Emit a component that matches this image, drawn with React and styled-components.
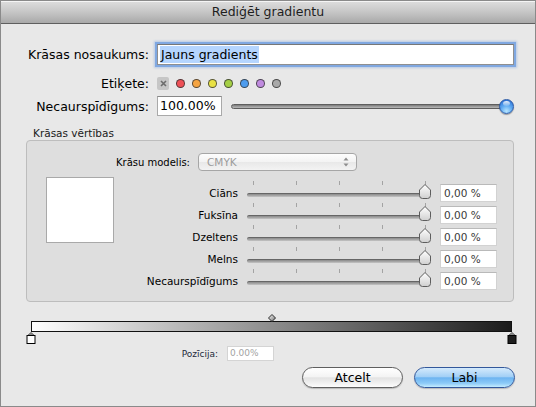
import React from 'react';
import styled, { createGlobalStyle } from 'styled-components';

const GlobalStyle = createGlobalStyle`
	* {
		box-sizing: border-box;
	}

	html,
	body {
		margin: 0;
		padding: 0;
		background: #e8e8e8;
	}

	body {
		font-family: 'DejaVu Sans', 'Liberation Sans', sans-serif;
		color: #000;
	}
`;

const tagColors = ['#ee5157', '#f5a442', '#e9e245', '#a5cf45', '#4d9cee', '#c08bdf', '#a9a9a9'];
const channels = ['Ciāns', 'Fuksīna', 'Dzeltens', 'Melns', 'Necaurspīdīgums'];
const stops = [
	{ pos: 0, color: '#ffffff' },
	{ pos: 100, color: '#1e1e1e' },
];

const ChannelKnob = () => (
	<KnobIcon width='12' height='15' viewBox='0 0 12 15'>
		<defs>
			<linearGradient id='knobFill' x1='0' y1='0' x2='0' y2='1'>
				<stop offset='0' stopColor='#ffffff' />
				<stop offset='1' stopColor='#d0d0d0' />
			</linearGradient>
		</defs>
		<path d='M6 0.5 L11.5 6 V11.5 Q11.5 14.5 8.5 14.5 H3.5 Q0.5 14.5 0.5 11.5 V6 Z' fill='url(#knobFill)' stroke='#5d5d5d' />
	</KnobIcon>
);

const StopHandle = ({ color }) => (
	<svg width='10' height='12' viewBox='0 0 10 12'>
		<polygon points='1.5,3.5 5,0.5 8.5,3.5' fill='#8a8a8a' stroke='#555' strokeWidth='0.8' />
		<rect x='1' y='3.5' width='8' height='8' fill={color} stroke='#000' />
	</svg>
);

const App = () => {
	return (
		<>
			<GlobalStyle />
			<Window>
				<TitleBar>Rediģēt gradientu</TitleBar>

				<FieldRow $top={20} $height={21}>
					<FieldLabel>Krāsas nosaukums:</FieldLabel>
					<NameField>
						<Selected>Jauns gradients</Selected>
					</NameField>
				</FieldRow>

				<FieldRow $top={11} $height={13}>
					<FieldLabel>Etiķete:</FieldLabel>
					<TagList>
						<ClearTag>
							<svg width='7' height='7' viewBox='0 0 7 7'>
								<path d='M1 1 L6 6 M6 1 L1 6' stroke='#6c6c6c' strokeWidth='1.6' />
							</svg>
						</ClearTag>
						{tagColors.map((color) => (
							<TagDot key={color} $color={color} />
						))}
					</TagList>
				</FieldRow>

				<FieldRow $top={7} $height={20}>
					<FieldLabel>Necaurspīdīgums:</FieldLabel>
					<OpacityControls>
						<PercentField>100.00%</PercentField>
						<OpacitySlider>
							<OpacityTrack />
							<AquaKnob />
						</OpacitySlider>
					</OpacityControls>
				</FieldRow>

				<SectionTitle>Krāsas vērtības</SectionTitle>
				<Group>
					<ModelRow>
						<ModelLabel>Krāsu modelis:</ModelLabel>
						<PopUp>
							CMYK
							<svg width='6' height='10' viewBox='0 0 6 10'>
								<path d='M3 0.5 L5.5 3.5 H0.5 Z M3 9.5 L5.5 6.5 H0.5 Z' fill='#8d8d8d' />
							</svg>
						</PopUp>
					</ModelRow>
					<GroupBody>
						<Swatch />
						<ChannelTable>
							{channels.map((name) => (
								<ChannelRow key={name}>
									<ChannelLabel>{name}</ChannelLabel>
									<ChannelSlider>
										<Ticks>
											{[0, 1, 2, 3, 4].map((i) => (
												<Tick key={i} />
											))}
										</Ticks>
										<ChannelTrack />
										<ChannelKnob />
									</ChannelSlider>
									<ValueBox>0,00 %</ValueBox>
								</ChannelRow>
							))}
						</ChannelTable>
					</GroupBody>
				</Group>

				<GradientEditor>
					<Midpoint style={{ left: '50%' }}>
						<svg width='8' height='8' viewBox='0 0 8 8'>
							<defs>
								<linearGradient id='midFill' x1='0' y1='0' x2='1' y2='1'>
									<stop offset='0' stopColor='#ffffff' />
									<stop offset='1' stopColor='#6a6a6a' />
								</linearGradient>
							</defs>
							<polygon points='4,0.5 7.5,4 4,7.5 0.5,4' fill='url(#midFill)' stroke='#2a2a2a' />
						</svg>
					</Midpoint>
					<GradientBar />
					{stops.map((stop) => (
						<Stop key={stop.pos} style={{ left: `${stop.pos}%` }}>
							<StopHandle color={stop.color} />
						</Stop>
					))}
				</GradientEditor>

				<PositionRow>
					<PositionLabel>Pozīcija:</PositionLabel>
					<PositionField>0.00%</PositionField>
				</PositionRow>

				<ButtonRow>
					<Button>Atcelt</Button>
					<Button $primary>Labi</Button>
				</ButtonRow>
			</Window>
		</>
	);
};

export default App;

const Window = styled.div`
	width: 536px;
	height: 407px;
	display: flex;
	flex-direction: column;
	border: 1px solid #8a8a8a;
	background: #e8e8e8;
	overflow: hidden;
`;

const TitleBar = styled.div`
	height: 23px;
	flex-shrink: 0;
	border-bottom: 1px solid #5f5f5f;
	background: linear-gradient(#dedede, #c6c6c6 50%, #a9a9a9);
	box-shadow: inset 0 1px 0 rgba(255, 255, 255, 0.7);
	text-align: center;
	font-size: 12.5px;
	line-height: 22px;
	color: #1e1e1e;
`;

const FieldRow = styled.div`
	display: grid;
	grid-template-columns: 148px 1fr;
	column-gap: 8px;
	align-items: center;
	flex-shrink: 0;
	margin-top: ${({ $top }) => $top}px;
	height: ${({ $height }) => $height}px;
	padding-right: 21px;
`;

const FieldLabel = styled.div`
	text-align: right;
	font-size: 12.5px;
	white-space: nowrap;
`;

const NameField = styled.div`
	height: 21px;
	padding: 1px 2px;
	background: #fff;
	border: 1px solid #8f8f8f;
	border-top-color: #777;
	box-shadow: 0 0 0 2px rgba(122, 164, 224, 0.9), 0 0 2px 3px rgba(122, 164, 224, 0.45);
	font-size: 12.5px;
	line-height: 17px;
`;

const Selected = styled.span`
	display: inline-block;
	background: #b5d5fe;
	padding: 0 1px;
`;

const TagList = styled.div`
	display: flex;
	align-items: center;
	gap: 7px;
`;

const ClearTag = styled.div`
	width: 12px;
	height: 13px;
	display: flex;
	align-items: center;
	justify-content: center;
	border-radius: 2px;
	background: #c6c6c6;
`;

const TagDot = styled.div`
	width: 9px;
	height: 9px;
	border-radius: 50%;
	background: ${({ $color }) => $color};
	border: 1px solid rgba(40, 40, 40, 0.75);
`;

const OpacityControls = styled.div`
	display: flex;
	align-items: center;
	height: 100%;
`;

const PercentField = styled.div`
	width: 65px;
	height: 20px;
	padding-left: 2px;
	background: #fff;
	border: 1px solid #a9a9a9;
	border-top-color: #888;
	font-size: 12.5px;
	line-height: 18px;
`;

const OpacitySlider = styled.div`
	flex: 1;
	display: flex;
	align-items: center;
	margin-left: 9px;
`;

const OpacityTrack = styled.div`
	flex: 1;
	height: 5px;
	margin-right: -8px;
	border-radius: 3px;
	border: 1px solid #5e5e5e;
	background: linear-gradient(#7a7a7a, #9c9c9c 50%, #b9b9b9);
`;

const AquaKnob = styled.div`
	position: relative;
	width: 15px;
	height: 15px;
	border-radius: 50%;
	border: 1px solid #2b5aa6;
	background: radial-gradient(circle at 50% 85%, #b8e6ff 0%, #5ea9f1 45%, #1f62cf 100%);
	box-shadow: 0 1px 1px rgba(0, 0, 0, 0.35);

	&::after {
		content: '';
		position: absolute;
		left: 3px;
		top: 1px;
		width: 7px;
		height: 5px;
		border-radius: 50%;
		background: linear-gradient(rgba(255, 255, 255, 0.9), rgba(255, 255, 255, 0.15));
	}
`;

const SectionTitle = styled.div`
	margin: 11px 0 0 32px;
	height: 13px;
	flex-shrink: 0;
	font-size: 10.5px;
	line-height: 13px;
	color: #1a1a1a;
`;

const Group = styled.div`
	margin: 0 21px 0 25px;
	height: 162px;
	flex-shrink: 0;
	padding: 12px 0 0 19px;
	border: 1px solid #bdbdbd;
	border-radius: 4px;
	background: #dedede;
`;

const ModelRow = styled.div`
	display: flex;
	align-items: center;
	height: 18px;
`;

const ModelLabel = styled.div`
	width: 144px;
	margin-right: 8px;
	text-align: right;
	font-size: 10px;
`;

const PopUp = styled.div`
	width: 159px;
	height: 18px;
	display: flex;
	align-items: center;
	justify-content: space-between;
	padding: 0 7px 0 8px;
	border: 1px solid #a6a6a6;
	border-radius: 4px;
	background: linear-gradient(#fdfdfd, #f3f3f3 50%, #e8e8e8 51%, #f3f3f3);
	color: #9c9c9c;
	font-size: 10.5px;
`;

const GroupBody = styled.div`
	display: flex;
	align-items: flex-start;
	margin-top: 6px;
`;

const Swatch = styled.div`
	width: 68px;
	height: 66px;
	flex-shrink: 0;
	background: #fff;
	border: 1px solid #a9a9a9;
`;

const ChannelTable = styled.div`
	display: flex;
	flex-direction: column;
	margin-top: 5px;
`;

const ChannelRow = styled.div`
	display: grid;
	grid-template-columns: 124px 184px 57px;
	column-gap: 9px;
	height: 22px;
`;

const ChannelLabel = styled.div`
	align-self: center;
	text-align: right;
	font-size: 10.5px;
	white-space: nowrap;
`;

const ChannelSlider = styled.div`
	position: relative;
	height: 22px;
`;

const Ticks = styled.div`
	display: flex;
	justify-content: space-between;
	height: 4px;
	margin-top: -1px;
	padding: 0 5.5px;
`;

const Tick = styled.div`
	width: 1px;
	height: 4px;
	background: #a3a3a3;
`;

const ChannelTrack = styled.div`
	height: 4px;
	margin: 8px 6px 0 0;
	border-radius: 2px;
	border-top: 1px solid #666;
	background: linear-gradient(#8a8a8a, #a8a8a8 55%, #c6c6c6);
`;

const KnobIcon = styled.svg`
	position: absolute;
	right: 0;
	top: 2px;
`;

const ValueBox = styled.div`
	align-self: center;
	height: 18px;
	padding-left: 3px;
	background: #fff;
	border: 1px solid #d2d2d2;
	border-top-color: #b9b9b9;
	font-size: 10.5px;
	line-height: 16px;
	color: #3a3a3a;
`;

const GradientEditor = styled.div`
	position: relative;
	flex-shrink: 0;
	width: 481px;
	height: 30px;
	margin: 12px 0 0 30px;
	padding-top: 7px;
`;

const GradientBar = styled.div`
	height: 11px;
	border: 1px solid #111;
	background: linear-gradient(to right, #ffffff, #1b1b1b);
`;

const Midpoint = styled.div`
	position: absolute;
	top: 0;
	width: 8px;
	height: 8px;
	transform: translateX(-50%);

	svg {
		display: block;
	}
`;

const Stop = styled.div`
	position: absolute;
	top: 18px;
	width: 10px;
	height: 12px;
	transform: translateX(-50%);

	svg {
		display: block;
	}
`;

const PositionRow = styled.div`
	display: flex;
	align-items: center;
	flex-shrink: 0;
	height: 15px;
	margin-top: 2px;
`;

const PositionLabel = styled.div`
	width: 217px;
	margin-right: 9px;
	text-align: right;
	font-size: 9px;
	color: #1c2a3a;
`;

const PositionField = styled.div`
	width: 47px;
	height: 15px;
	padding-left: 2px;
	background: #fff;
	border: 1px solid #d4d4d4;
	font-size: 9px;
	line-height: 13px;
	color: #a3a3a3;
`;

const ButtonRow = styled.div`
	display: flex;
	justify-content: flex-end;
	gap: 11px;
	flex-shrink: 0;
	margin-top: 6px;
	padding-right: 20px;
`;

const Button = styled.div`
	width: 101px;
	height: 21px;
	display: flex;
	align-items: center;
	justify-content: center;
	border-radius: 11px;
	font-size: 12.5px;
	color: #000;
	box-shadow: 0 1px 1px rgba(0, 0, 0, 0.2);
	border: 1px solid ${({ $primary }) => ($primary ? '#33589b' : '#5f5f5f')};
	background: ${({ $primary }) =>
		$primary
			? 'linear-gradient(#d4eafc 0%, #a3d0f6 45%, #6db4f1 52%, #8ccaf7 80%, #c4ecff 100%)'
			: 'linear-gradient(#ffffff 0%, #f4f4f4 45%, #e3e3e3 52%, #f1f1f1 80%, #fdfdfd 100%)'};
`;
